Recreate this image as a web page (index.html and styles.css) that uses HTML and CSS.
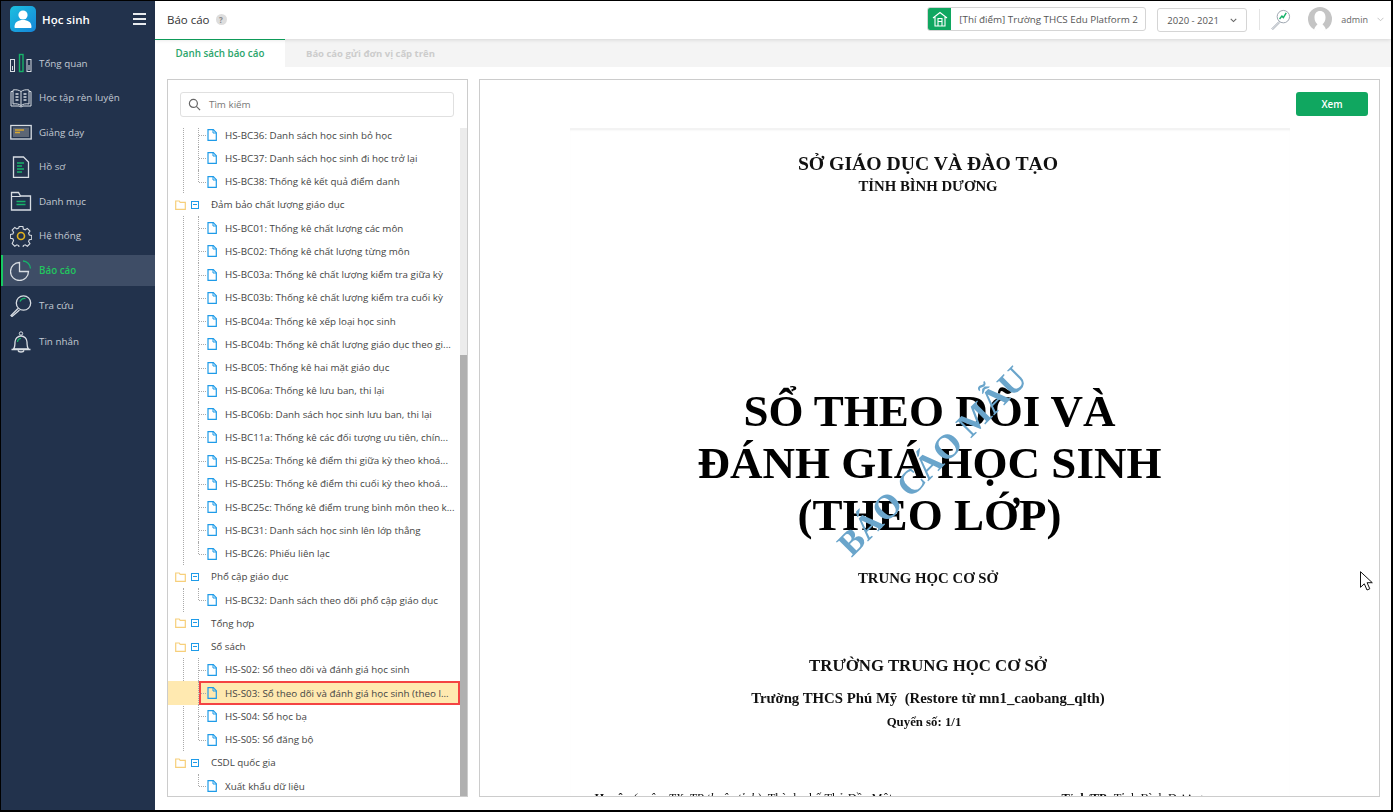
FILE: index.html
```html
<!DOCTYPE html>
<html lang="vi">
<head>
<meta charset="utf-8">
<title>Báo cáo</title>
<link rel="stylesheet" href="styles.css">
</head>
<body>
<div class="frame">
  <aside class="sidebar">
    <div class="brand">
      <span class="brand-logo">
        <svg viewBox="0 0 26 26" width="26" height="26"><circle cx="13" cy="9" r="4.6" fill="#fff"/><path d="M4.5 21c0-5 3.6-7 8.500-7s8.500 2 8.500 7c0 .6-.4 1-1 1h-15c-.6 0-1-.4-1-1z" fill="#fff"/></svg>
      </span>
      <span class="brand-name">Học sinh</span>
      <span class="burger"><i></i><i></i><i></i></span>
    </div>
    <nav class="nav">
      <a class="nav-item">
        <svg class="nav-icon" viewBox="0 0 22 22" fill="none" stroke="#d8dde3"><rect x=".5" y="7.500" width="4" height="12"/><rect x="9.500" y="2.500" width="3.500" height="17" stroke="#17b26a" stroke-width="1.400"/><rect x="17" y="7.500" width="4" height="12"/><path d="M2.500 14v4M19 13v5" stroke="#d8dde3"/></svg>
        <span>Tổng quan</span>
      </a>
      <a class="nav-item">
        <svg class="nav-icon" viewBox="0 0 22 22" fill="none" stroke="#d8dde3"><path d="M1 4.500h2V3c3-.6 6 0 8 1.500C13 3 16 2.400 19 3v1.500h2V19h-8l-2 1-2-1H1z"/><path d="M3 4.500V17c3-.6 6 0 8 1.500 2-1.500 5-2.100 8-1.500V4.500M11 4.500v14"/><path d="M5.500 7h3M5.500 10h3M5.500 13h3M13.500 7h3M13.500 10h3M13.500 13h3" stroke-width="1.500"/></svg>
        <span>Học tập rèn luyện</span>
      </a>
      <a class="nav-item">
        <svg class="nav-icon" viewBox="0 0 22 22" fill="none" stroke="#d8dde3"><rect x=".8" y="4.500" width="20.400" height="13.500" stroke-width="1.300"/><rect x="3" y="6.500" width="16" height="9.500" fill="#5c6675" stroke="none"/><path d="M5 9h9M5 11.500h5" stroke="#d9a82e" stroke-width="1.500"/></svg>
        <span>Giảng dạy</span>
      </a>
      <a class="nav-item">
        <svg class="nav-icon" viewBox="0 0 22 22" fill="none" stroke="#d8dde3"><path d="M3.500 1h10l5 5v15.500h-15z" stroke-width="1.300"/><path d="M7 7h7M7 10h5M7 13h7M7 16h5" stroke="#17b26a" stroke-width="1.400"/></svg>
        <span>Hồ sơ</span>
      </a>
      <a class="nav-item">
        <svg class="nav-icon" viewBox="0 0 22 22" fill="none" stroke="#d8dde3"><path d="M1.500 20V2.500h7l2 3.500h10v14z" stroke-width="1.300"/><path d="M1.500 6.500h9" /><path d="M6.500 11.500h9M6.500 14.500h9" stroke="#17b26a" stroke-width="1.400"/></svg>
        <span>Danh mục</span>
      </a>
      <a class="nav-item">
        <svg class="nav-icon" viewBox="0 0 22 22" fill="none" stroke="#d8dde3"><path d="M9 1h4l.5 2.700 2 .8 2.300-1.500 2.800 2.800-1.500 2.300.8 2 2.600.5v4l-2.600.5-.8 2 1.500 2.300-2.800 2.800-2.300-1.500-2 .8-.5 2.600H9l-.5-2.600-2-.8-2.200 1.500-2.800-2.800L3 16.100l-.8-2-2.700-.5v-4l2.700-.5.800-2L1.500 4.800l2.800-2.800 2.200 1.500 2-.8z" transform="translate(.8 .6) scale(.93)" stroke-width="1.200"/><circle cx="11" cy="11" r="3.500" stroke="#e2b21d" stroke-width="1.600"/></svg>
        <span>Hệ thống</span>
      </a>
      <a class="nav-item nav-item--active">
        <svg class="nav-icon" viewBox="0 0 22 22" fill="none" stroke="#d8dde3"><path d="M9.500 3.500a9 9 0 1 0 9 9h-9z" stroke-width="1.300"/><path d="M13 2a8 8 0 0 1 7.500 7.500" stroke="#17b26a" stroke-width="1.300"/></svg>
        <span>Báo cáo</span>
      </a>
      <a class="nav-item">
        <svg class="nav-icon" viewBox="0 0 22 22" fill="none" stroke="#d8dde3"><circle cx="13.500" cy="8" r="7.200" stroke-width="1.300"/><path d="M8 13.500L1 20.500l1 1L9.500 15" stroke-width="1.300"/><path d="M10 6.500a5 5 0 0 1 5.500-3" stroke="#17b26a" stroke-width="1.300"/></svg>
        <span>Tra cứu</span>
      </a>
      <a class="nav-item">
        <svg class="nav-icon" viewBox="0 0 22 22" fill="none" stroke="#d8dde3"><circle cx="11" cy="2.500" r="1.700"/><path d="M3.500 18c1.200-1.500 1.500-3.500 1.500-7a6 6 0 0 1 12 0c0 3.500.3 5.500 1.500 7z" stroke-width="1.300"/><path d="M1.500 18.500h19M8 19.500c.5 2 5.500 2 6 0" stroke-width="1.300"/><path d="M7.500 11a4 4 0 0 1 3.500-3.700" stroke="#17b26a" stroke-width="1.300"/></svg>
        <span>Tin nhắn</span>
      </a>
    </nav>
  </aside>

  <main class="main">
    <header class="topbar">
      <div class="page-title">Báo cáo <span class="help">?</span></div>
      <div class="school">
        <span class="school-icon">
          <svg viewBox="0 0 16 16" width="16" height="16" fill="none" stroke="#fff" stroke-width="1.100"><path d="M1 7l7-5.500L15 7M3 6v9h10V6"/><path d="M6 15V7.500h4V15M6 10.500h4"/></svg>
        </span>
        <span class="school-name">[Thí điểm] Trường THCS Edu Platform 2</span>
      </div>
      <div class="year">
        <span>2020 - 2021</span>
        <svg viewBox="0 0 8 6" width="7" height="5" fill="none" stroke="#666" stroke-width="1.300"><path d="M.7 1l3.300 3.300L7.300 1"/></svg>
      </div>
      <span class="divider"></span>
      <svg class="finder" viewBox="0 0 22 22" width="21" height="21" fill="none" stroke="#9aa3ad"><circle cx="14" cy="8" r="6.500"/><path d="M9.500 13L2 20.500l1 1L10.500 14"/><path d="M10 10.500l2.500-3 1.500 1.500 3-5" stroke="#17b26a" stroke-width="1.500"/></svg>
      <span class="avatar">
        <svg viewBox="0 0 24 24" width="24" height="24"><circle cx="12" cy="12" r="12" fill="#c4c4c4"/><path d="M12 4c-3.500 0-5.500 2.600-5.500 6.500 0 3 1.200 5.500 3 6.800C8 19 6.500 20.500 6 23a12 12 0 0 0 12 0c-.5-2.500-2-4-3.500-5.700 1.800-1.300 3-3.800 3-6.800C17.500 6.600 15.500 4 12 4z" fill="#fff"/></svg>
      </span>
      <span class="user">admin</span>
      <svg viewBox="0 0 8 6" width="7" height="5" fill="none" stroke="#bbb"><path d="M.5 1l3.500 3.500L7.500 1"/></svg>
    </header>

    <div class="tabs">
      <div class="tab tab--active">Danh sách báo cáo</div>
      <div class="tab">Báo cáo gửi đơn vị cấp trên</div>
    </div>

    <div class="content">
      <section class="tree-panel">
        <div class="search">
          <svg viewBox="0 0 14 14" width="13" height="13" fill="none" stroke="#666" stroke-width="1.300"><circle cx="5.800" cy="5.800" r="4.300"/><path d="M9 9l4 4"/></svg>
          <span>Tìm kiếm</span>
        </div>
        <div class="tree-wrap">
          <div class="tree">
            <div class="group-body">
              <ul class="leaves">
                <li class="leaf"><svg class="file"><use href="#file"/></svg><span class="leaf-text">HS-BC36: Danh sách học sinh bỏ học</span></li>
                <li class="leaf"><svg class="file"><use href="#file"/></svg><span class="leaf-text">HS-BC37: Danh sách học sinh đi học trở lại</span></li>
                <li class="leaf"><svg class="file"><use href="#file"/></svg><span class="leaf-text">HS-BC38: Thống kê kết quả điểm danh</span></li>
              </ul>
            </div>

            <div class="group-head"><svg class="folder"><use href="#folder"/></svg><span class="minus"></span><span>Đảm bảo chất lượng giáo dục</span></div>
            <div class="group-body">
              <ul class="leaves">
                <li class="leaf"><svg class="file"><use href="#file"/></svg><span class="leaf-text">HS-BC01: Thống kê chất lượng các môn</span></li>
                <li class="leaf"><svg class="file"><use href="#file"/></svg><span class="leaf-text">HS-BC02: Thống kê chất lượng từng môn</span></li>
                <li class="leaf"><svg class="file"><use href="#file"/></svg><span class="leaf-text">HS-BC03a: Thống kê chất lượng kiểm tra giữa kỳ</span></li>
                <li class="leaf"><svg class="file"><use href="#file"/></svg><span class="leaf-text">HS-BC03b: Thống kê chất lượng kiểm tra cuối kỳ</span></li>
                <li class="leaf"><svg class="file"><use href="#file"/></svg><span class="leaf-text">HS-BC04a: Thống kê xếp loại học sinh</span></li>
                <li class="leaf"><svg class="file"><use href="#file"/></svg><span class="leaf-text">HS-BC04b: Thống kê chất lượng giáo dục theo gi...</span></li>
                <li class="leaf"><svg class="file"><use href="#file"/></svg><span class="leaf-text">HS-BC05: Thống kê hai mặt giáo dục</span></li>
                <li class="leaf"><svg class="file"><use href="#file"/></svg><span class="leaf-text">HS-BC06a: Thống kê lưu ban, thi lại</span></li>
                <li class="leaf"><svg class="file"><use href="#file"/></svg><span class="leaf-text">HS-BC06b: Danh sách học sinh lưu ban, thi lại</span></li>
                <li class="leaf"><svg class="file"><use href="#file"/></svg><span class="leaf-text">HS-BC11a: Thống kê các đối tượng ưu tiên, chín...</span></li>
                <li class="leaf"><svg class="file"><use href="#file"/></svg><span class="leaf-text">HS-BC25a: Thống kê điểm thi giữa kỳ theo khoá...</span></li>
                <li class="leaf"><svg class="file"><use href="#file"/></svg><span class="leaf-text">HS-BC25b: Thống kê điểm thi cuối kỳ theo khoá...</span></li>
                <li class="leaf"><svg class="file"><use href="#file"/></svg><span class="leaf-text">HS-BC25c: Thống kê điểm trung bình môn theo k...</span></li>
                <li class="leaf"><svg class="file"><use href="#file"/></svg><span class="leaf-text">HS-BC31: Danh sách học sinh lên lớp thẳng</span></li>
                <li class="leaf"><svg class="file"><use href="#file"/></svg><span class="leaf-text">HS-BC26: Phiếu liên lạc</span></li>
              </ul>
            </div>

            <div class="group-head"><svg class="folder"><use href="#folder"/></svg><span class="minus"></span><span>Phổ cập giáo dục</span></div>
            <div class="group-body">
              <ul class="leaves">
                <li class="leaf"><svg class="file"><use href="#file"/></svg><span class="leaf-text">HS-BC32: Danh sách theo dõi phổ cập giáo dục</span></li>
              </ul>
            </div>

            <div class="group-head"><svg class="folder"><use href="#folder"/></svg><span class="minus"></span><span>Tổng hợp</span></div>

            <div class="group-head"><svg class="folder"><use href="#folder"/></svg><span class="minus"></span><span>Sổ sách</span></div>
            <div class="group-body">
              <ul class="leaves">
                <li class="leaf"><svg class="file"><use href="#file"/></svg><span class="leaf-text">HS-S02: Sổ theo dõi và đánh giá học sinh</span></li>
                <li class="leaf leaf--selected"><span class="leaf-band"></span><svg class="file"><use href="#file-sel"/></svg><span class="leaf-text">HS-S03: Sổ theo dõi và đánh giá học sinh (theo l...</span></li>
                <li class="leaf"><svg class="file"><use href="#file"/></svg><span class="leaf-text">HS-S04: Sổ học bạ</span></li>
                <li class="leaf"><svg class="file"><use href="#file"/></svg><span class="leaf-text">HS-S05: Sổ đăng bộ</span></li>
              </ul>
            </div>

            <div class="group-head"><svg class="folder"><use href="#folder"/></svg><span class="minus"></span><span>CSDL quốc gia</span></div>
            <div class="group-body group-body--plain">
              <ul class="leaves">
                <li class="leaf"><svg class="file"><use href="#file"/></svg><span class="leaf-text">Xuất khẩu dữ liệu</span></li>
              </ul>
            </div>
          </div>
          <div class="scrollbar"><span class="scroll-thumb"></span></div>
        </div>
      </section>

      <section class="report">
        <div class="report-bar"><button class="btn-view">Xem</button></div>
        <article class="page">
          <p class="d-org">SỞ GIÁO DỤC VÀ ĐÀO TẠO</p>
          <p class="d-prov">TỈNH BÌNH DƯƠNG</p>
          <h1 class="d-title">SỔ THEO DÕI VÀ<br>ĐÁNH GIÁ HỌC SINH<br>(THEO LỚP)</h1>
          <p class="d-level">TRUNG HỌC CƠ SỞ</p>
          <p class="d-school">TRƯỜNG TRUNG HỌC CƠ SỞ</p>
          <p class="d-name">Trường THCS Phú Mỹ&nbsp; (Restore từ mn1_caobang_qlth)</p>
          <p class="d-vol">Quyển số: 1/1</p>
          <div class="d-meta">
            <span class="d-district"><b>Huyện</b> <i>(quận, TX, TP thuộc tỉnh)</i>: Thành phố Thủ Dầu Một</span>
            <span class="d-city"><b>Tỉnh/TP:</b> Tỉnh Bình Dương</span>
          </div>
          <div class="watermark">BÁO CÁO MẪU</div>
        </article>
      </section>
    </div>
  </main>

  <svg class="cursor" viewBox="0 0 13 20" width="13" height="20"><path d="M.5.700v15.600l3.800-3.500 2.700 6.200 2.800-1.200-2.700-6.100h5.200z" fill="#fff" stroke="#111" stroke-width="1"/></svg>
</div>

<svg class="defs" width="0" height="0">
  <defs>
    <symbol id="file" viewBox="0 0 10 12"><path d="M1 .700h5.300L9.300 3.700v7.600H1z" fill="#fff" stroke="#1e9be8" stroke-width="1.200"/><path d="M6 .700v3.300h3.300" fill="none" stroke="#1e9be8"/></symbol>
    <symbol id="file-sel" viewBox="0 0 10 12"><path d="M1 .700h5.300L9.300 3.700v7.600H1z" fill="#ffe9b0" stroke="#1e9be8" stroke-width="1.200"/><path d="M6 .700v3.300h3.300" fill="none" stroke="#1e9be8"/></symbol>
    <symbol id="folder" viewBox="0 0 11 10"><path d="M.7 1h3.500l1 1.300h5.100v7H.7z" fill="#fff" stroke="#f7cf7a" stroke-width="1.200"/></symbol>
  </defs>
</svg>
</body>
</html>
```

FILE: styles.css
```css
* { box-sizing: border-box; }
html, body { margin: 0; padding: 0; }
body {
  font-family: "Open Sans", "Noto Sans", sans-serif;
  font-size: 9.800px;
  color: #444;
  background: #fff;
}
p, h1, ul { margin: 0; padding: 0; }
ul { list-style: none; }

.frame {
  position: relative;
  display: flex;
  width: 1393px;
  height: 812px;
  border-style: solid;
  border-color: #000;
  border-width: 1px 2px 2px 1px;
  overflow: hidden;
}

/* Sidebar */
.sidebar {
  flex: 0 0 154px;
  background: #22324c;
  color: #c3cad3;
}
.brand {
  display: flex;
  align-items: center;
  height: 36px;
  padding: 5px 9px 5px 9px;
}
.brand-logo {
  display: flex;
  width: 26px;
  height: 26px;
  border-radius: 5px;
  background: linear-gradient(135deg, #1cc0e0, #1584d8);
}
.brand-name {
  margin-left: 6px;
  flex: 1;
  font-size: 11.500px;
  font-weight: 600;
  color: #fff;
}
.burger {
  display: flex;
  flex-direction: column;
  gap: 3px;
  width: 13px;
}
.burger i { display: block; height: 2px; background: #e8ebee; }

.nav { padding-top: 9px; }
.nav-item {
  position: relative;
  display: flex;
  align-items: center;
  height: 34.500px;
  padding-left: 9px;
  font-size: 9.800px;
}
.nav-item:nth-child(n+8) { height: 36px; }
.nav-item span { margin-left: 7px; }
.nav-icon { width: 22px; height: 22px; flex: none; }
.nav-item--active { color: #22c55e; font-weight: 600; }
.nav-item--active::before {
  content: "";
  position: absolute;
  left: 0;
  right: 0;
  top: 2px;
  bottom: 2px;
  background: #3e4d66;
  border-left: 2px solid #17c964;
}
.nav-item--active > * { position: relative; }

/* Main */
.main {
  flex: 1;
  min-width: 0;
  display: flex;
  flex-direction: column;
}
.topbar {
  position: relative;
  z-index: 1;
  display: flex;
  align-items: center;
  height: 38px;
  flex: none;
  padding: 0 7px 2px 12px;
  background: #fff;
  box-shadow: 0 1px 4px rgba(0,0,0,.12);
}
.page-title {
  flex: 1;
  font-size: 11.500px;
  color: #333;
}
.help {
  display: inline-block;
  width: 11px;
  height: 11px;
  margin-left: 3px;
  border-radius: 50%;
  background: #ddd;
  color: #888;
  font-size: 8px;
  font-weight: 700;
  line-height: 11px;
  text-align: center;
  vertical-align: 1px;
}
.school {
  display: flex;
  align-items: center;
  width: 219px;
  height: 24px;
  border: 1px solid #d5d5d5;
  border-radius: 3px;
  overflow: hidden;
}
.school-icon {
  display: flex;
  align-items: center;
  justify-content: center;
  width: 23px;
  height: 100%;
  background: #10a760;
}
.school-name { margin-left: 8px; white-space: nowrap; color: #555; font-size: 9.800px; }
.year {
  display: flex;
  align-items: center;
  justify-content: space-between;
  width: 90px;
  height: 24px;
  margin: 2px 0 0 11px;
  padding: 0 9px;
  border: 1px solid #d5d5d5;
  border-radius: 3px;
  font-size: 9.500px;
  color: #555;
}
.divider { width: 1px; height: 21px; margin-left: 12px; background: #e4e4e4; }
.finder { margin-left: 10px; }
.avatar { display: flex; margin-left: 17px; }
.user { margin-left: 9px; margin-right: 9px; font-size: 9px; color: #666; }

.tabs {
  display: flex;
  flex: none;
  height: 28px;
  background: #f4f4f4;
}
.tab {
  display: flex;
  align-items: center;
  padding: 0 21px;
  font-size: 9.500px;
  font-weight: 700;
  color: #ccc;
}
.tab--active {
  width: 130px;
  justify-content: center;
  padding: 0;
  background: #fff;
  border-top: 1px solid #10a760;
  color: #2ba56b;
  font-size: 9.800px;
  font-weight: 600;
}

.content {
  flex: 1;
  min-height: 0;
  display: flex;
  gap: 11px;
  padding: 12px 11px 13px 12px;
}

/* Tree */
.tree-panel {
  flex: 0 0 301px;
  display: flex;
  flex-direction: column;
  border: 1px solid #ccc;
}
.search {
  display: flex;
  align-items: center;
  gap: 8px;
  height: 25px;
  flex: none;
  margin: 12px 13px 11px 12px;
  padding-left: 7px;
  border: 1px solid #e0e0e0;
  border-radius: 3px;
  color: #777;
}
.tree-wrap {
  position: relative;
  flex: 1;
  min-height: 0;
  overflow: hidden;
}
.tree {
  margin-top: -4.600px;
  width: 292px;
  color: #444;
  white-space: nowrap;
}
.group-head {
  display: flex;
  align-items: center;
  height: 23.250px;
  padding-left: 7px;
}
.folder { width: 11px; height: 10px; flex: none; }
.minus {
  position: relative;
  width: 8px;
  height: 8px;
  flex: none;
  margin: 0 12px 0 5px;
  border: 1px solid #1e9be8;
}
.minus::after {
  content: "";
  position: absolute;
  left: 1px;
  right: 1px;
  top: 2px;
  height: 1px;
  background: #1e9be8;
}
.group-body {
  margin-left: 15px;
  border-left: 1px dotted #aaa;
}
.group-body--plain { border-left-color: transparent; }
.leaves { margin-left: 14px; }
.leaf {
  position: relative;
  display: flex;
  align-items: center;
  height: 23.250px;
  padding-left: 9px;
}
.leaf::before {
  content: "";
  position: absolute;
  left: 0;
  top: 0;
  bottom: 0;
  border-left: 1px dotted #aaa;
}
.leaf:last-child::before { bottom: 50%; }
.leaf::after {
  content: "";
  position: absolute;
  left: 1px;
  top: 50%;
  width: 7px;
  border-top: 1px dotted #aaa;
}
.file { width: 10px; height: 12px; flex: none; position: relative; }
.leaf-text {
  position: relative;
  margin-left: 8px;
}
.leaf--selected { z-index: 0; }
.leaf-band {
  position: absolute;
  z-index: -1;
  top: 0;
  bottom: 0;
  left: -30px;
  right: 0;
  background: #ffe9b0;
}
.leaf--selected::after { z-index: 1; }
.leaf--selected .file { z-index: 1; }
.leaf--selected .leaf-band::after {
  content: "";
  position: absolute;
  left: 30px;
  right: 0;
  top: 0;
  bottom: 0;
  border: 2px solid #f44343;
  margin-left: 1px;
}
.scrollbar {
  position: absolute;
  top: 0;
  right: 0;
  bottom: 0;
  width: 7px;
  background: #ececec;
}
.scroll-thumb {
  display: block;
  margin-top: 227px;
  height: 442px;
  background: #b0b0b0;
}

/* Report */
.report {
  flex: 1;
  min-width: 0;
  display: flex;
  flex-direction: column;
  border: 1px solid #ccc;
  overflow: hidden;
}
.report-bar {
  display: flex;
  justify-content: flex-end;
  flex: none;
  height: 48px;
  padding: 12px 11px 0 0;
}
.btn-view {
  width: 72px;
  height: 24px;
  padding: 0;
  border: 0;
  border-radius: 3px;
  background: #10a760;
  color: #fff;
  font: 600 9.800px "Open Sans", sans-serif;
}
.page {
  position: relative;
  flex: none;
  width: 720px;
  margin: 0 auto;
  padding-right: 3px;
  border-top: 2px solid #f3f3f3;
  box-shadow: inset 0 1px 2px -1px rgba(0,0,0,.08);
  font-family: "Liberation Serif", serif;
  font-weight: 700;
  color: #111;
  text-align: center;
  filter: blur(.3px);
}
.d-org { margin-top: 21px; font-size: 19.700px; line-height: 24px; }
.d-prov { margin-top: 1px; font-size: 14.800px; line-height: 20px; }
.d-title { margin-top: 189px; padding-left: 3px; font-size: 45px; line-height: 52px; color: #000; }
.d-level { margin-top: 27px; font-size: 14.800px; line-height: 20px; }
.d-school { margin-top: 66px; font-size: 16.800px; line-height: 24px; }
.d-name { margin-top: 10px; font-size: 14.800px; line-height: 20px; }
.d-vol { margin-top: 5px; padding-right: 8px; font-size: 12.800px; line-height: 18px; }
.d-meta {
  display: flex;
  margin-top: 58px;
  padding-left: 25px;
  font-size: 12.500px;
  line-height: 18px;
  font-weight: 400;
  text-align: left;
}
.d-meta b { font-weight: 700; }
.d-district { width: 467px; }
.watermark {
  position: absolute;
  left: 362px;
  top: 331px;
  transform: translate(-50%, -50%) rotate(-45deg);
  white-space: nowrap;
  font-size: 34.500px;
  line-height: 1;
  color: #6aa5cb;
}
.cursor {
  position: absolute;
  left: 1359px;
  top: 570px;
}
.defs { position: absolute; }
```
